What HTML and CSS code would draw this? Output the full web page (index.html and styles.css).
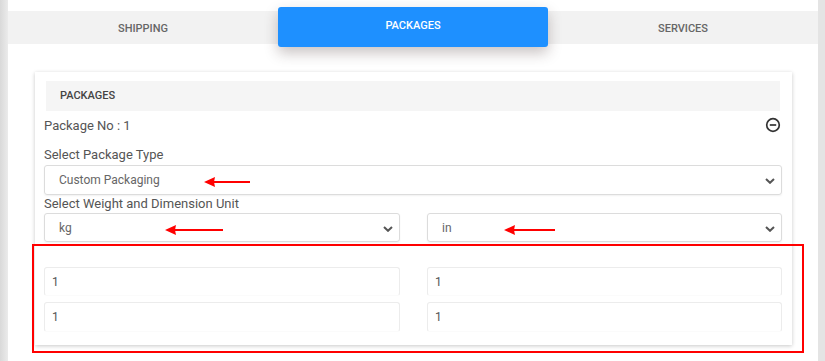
FILE: index.html
```html
<!DOCTYPE html>
<html lang="en">
<head>
    <meta charset="UTF-8">
    <meta name="viewport" content="width=device-width, initial-scale=1.0">
    <title>Packages</title>
    <link rel="stylesheet" href="styles.css">
</head>
<body>
    <div class="page">
        <div class="tabs">
            <div class="tab">SHIPPING</div>
            <div class="tab active">PACKAGES</div>
            <div class="tab">SERVICES</div>
        </div>

        <div class="card">
            <div class="card-header">PACKAGES</div>

            <div class="package-row">
                <span>Package No : 1</span>
                <svg class="remove-icon" width="16" height="16" viewBox="0 0 16 16">
                    <circle cx="8" cy="8" r="6.3" fill="none" stroke="#333" stroke-width="1.7"/>
                    <line x1="4.8" y1="8" x2="11.2" y2="8" stroke="#333" stroke-width="1.7"/>
                </svg>
            </div>

            <div class="label first">Select Package Type</div>
            <div class="select">
                <span>Custom Packaging</span>
                <svg class="note-arrow arrow-type" width="46" height="10" viewBox="0 0 46 10">
                    <polygon points="0,5 11,0 10,5 11,10" fill="#ff0000"/>
                    <line x1="9" y1="5" x2="46" y2="5" stroke="#ff0000" stroke-width="2"/>
                </svg>
                <svg class="chevron" width="10" height="6" viewBox="0 0 10 6">
                    <path d="M1 1 L5 4.8 L9 1" fill="none" stroke="#555" stroke-width="2"/>
                </svg>
            </div>

            <div class="label">Select Weight and Dimension Unit</div>
            <div class="unit-row">
                <div class="select">
                    <span>kg</span>
                    <svg class="note-arrow arrow-kg" width="58" height="10" viewBox="0 0 58 10">
                        <polygon points="0,5 11,0 10,5 11,10" fill="#ff0000"/>
                        <line x1="9" y1="5" x2="58" y2="5" stroke="#ff0000" stroke-width="2"/>
                    </svg>
                    <svg class="chevron" width="10" height="6" viewBox="0 0 10 6">
                        <path d="M1 1 L5 4.8 L9 1" fill="none" stroke="#555" stroke-width="2"/>
                    </svg>
                </div>
                <div class="select">
                    <span>in</span>
                    <svg class="note-arrow arrow-in" width="51" height="10" viewBox="0 0 51 10">
                        <polygon points="0,5 11,0 10,5 11,10" fill="#ff0000"/>
                        <line x1="9" y1="5" x2="51" y2="5" stroke="#ff0000" stroke-width="2"/>
                    </svg>
                    <svg class="chevron" width="10" height="6" viewBox="0 0 10 6">
                        <path d="M1 1 L5 4.8 L9 1" fill="none" stroke="#555" stroke-width="2"/>
                    </svg>
                </div>
            </div>

            <div class="dims">
                <div class="input">1</div>
                <div class="input">1</div>
                <div class="input">1</div>
                <div class="input">1</div>
            </div>

            <div class="highlight"></div>
        </div>
    </div>
</body>
</html>
```

FILE: styles.css
```css
* {
    box-sizing: border-box;
}
html, body {
    margin: 0;
    height: 100%;
}
body {
    background: linear-gradient(to right, #d9d9d9, #ebebeb 8px, #e4e4e4 8px);
    font-family: Roboto, "Liberation Sans", sans-serif;
    color: #555;
    overflow: hidden;
}
.page {
    margin: 0 7px 0 8px;
    height: 361px;
    background: white;
    padding-top: 11px;
}
.tabs {
    display: grid;
    grid-template-columns: 1fr 1fr 1fr;
    height: 33px;
    background: #f2f2f2;
}
.tab {
    display: flex;
    align-items: center;
    justify-content: center;
    font-size: 11px;
    font-weight: 500;
    color: #666;
    padding-top: 1px;
}
.tab.active {
    margin: -4px 0 -3px;
    padding-top: 0;
    padding-bottom: 3px;
    background: #1e90ff;
    color: white;
    border-radius: 3px;
    box-shadow: 0 6px 14px rgba(60, 40, 40, 0.28);
    position: relative;
    z-index: 1;
}
.card {
    position: relative;
    margin: 28px 26px 0 27px;
    padding: 9px 10px 13px 9px;
    background: white;
    box-shadow: 0 1px 4px rgba(0, 0, 0, 0.22);
}
.card-header {
    margin: 0 2px;
    height: 30px;
    line-height: 30px;
    padding-left: 14px;
    background: #f5f5f5;
    font-size: 11px;
    font-weight: 500;
    color: #444;
}
.package-row {
    height: 28px;
    display: flex;
    align-items: center;
    justify-content: space-between;
    font-size: 13px;
    color: #555;
}
.remove-icon {
    margin-right: 1px;
}
.label {
    font-size: 13px;
    line-height: 18px;
    color: #555;
}
.label.first {
    margin-top: 7px;
    margin-bottom: 1px;
}
.select {
    position: relative;
    height: 30px;
    display: flex;
    align-items: center;
    padding-left: 14px;
    border: 1px solid #dcdcdc;
    border-radius: 3px;
    box-shadow: 0 1px 2px rgba(0, 0, 0, 0.06);
    font-size: 12px;
    color: #666;
}
.chevron {
    position: absolute;
    right: 6px;
    top: 12px;
}
.note-arrow {
    position: absolute;
    top: 11px;
}
.arrow-type {
    left: 159px;
}
.arrow-kg {
    left: 120px;
}
.arrow-in {
    left: 76px;
}
.unit-row {
    display: grid;
    grid-template-columns: 356px 1fr;
    gap: 27px;
}
.unit-row .select {
    height: 29px;
}
.dims {
    margin-top: 25px;
    display: grid;
    grid-template-columns: 356px 1fr;
    column-gap: 27px;
    row-gap: 6px;
    grid-auto-flow: column;
    grid-template-rows: 29px 30px;
}
.input {
    display: flex;
    align-items: center;
    padding-left: 7px;
    border: 1px solid #ececec;
    border-bottom-color: #fbfbfb;
    border-radius: 3px;
    font-size: 12px;
    color: #555;
}
.highlight {
    position: absolute;
    left: -3px;
    top: 172px;
    width: 772px;
    height: 109px;
    border: 2px solid #ff0000;
}
```
